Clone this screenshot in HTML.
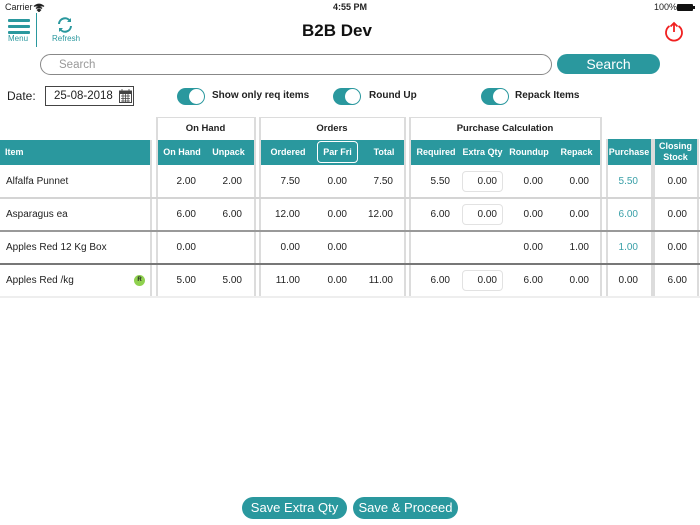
<!DOCTYPE html>
<html><head><meta charset="utf-8"><style>
*{margin:0;padding:0;box-sizing:border-box}
body{width:700px;height:525px;background:#fff;font-family:"Liberation Sans",Arial,sans-serif;position:relative;overflow:hidden;color:#222}
.a{position:absolute}
.teal{background:#2a989e}
.gt{position:absolute;top:117px;height:23px;font-size:9.5px;font-weight:bold;text-align:center;line-height:21px;border:1.5px solid #dcdcdc;border-bottom:none;background:#fff}
.hd{position:absolute;top:140px;height:25px;color:#fff;font-size:9px;font-weight:bold;line-height:25px}
.c{position:absolute;font-size:10px;text-align:right;line-height:33px;height:33px}
.vl{position:absolute;top:117px;width:1.5px;height:180px;background:#dcdcdc}
.hl{position:absolute;height:1.5px}
.tog{position:absolute;width:28px;height:17px;border-radius:9px;background:#2a989e}
.tog:after{content:"";position:absolute;right:1px;top:1px;width:15px;height:15px;border-radius:50%;background:#fff}
.tl{position:absolute;font-size:10px;font-weight:bold}
.box{position:absolute;width:41px;height:21px;border:1px solid #e2e2e2;border-radius:4px;font-size:10px;text-align:right;padding-right:5px;line-height:19px}
.btn{position:absolute;top:497px;height:22px;border-radius:11px;background:#2a989e;color:#fff;font-size:13px;text-align:center;line-height:22px}
</style></head><body>
<div class="a" style="left:5px;top:2px;font-size:9px">Carrier</div>
<svg class="a" style="left:33px;top:3px" width="12" height="9" viewBox="0 0 12 9"><path d="M1 3.5Q6 -1 11 3.5M3 5.5Q6 2.5 9 5.5M6 8.5L4.5 7Q6 5.8 7.5 7Z" stroke="#222" stroke-width="1.3" fill="#222"/></svg>
<div class="a" style="left:333px;top:2px;font-size:9px;font-weight:bold">4:55 PM</div>
<div class="a" style="left:654px;top:2px;font-size:9px">100%</div>
<div class="a" style="left:677px;top:4px;width:16px;height:7px;background:#111;border-radius:1px"></div>
<div class="a" style="left:693px;top:6px;width:1.5px;height:3px;background:#111"></div>
<div class="a teal" style="left:8px;top:19px;width:22px;height:3px;border-radius:1px"></div>
<div class="a teal" style="left:8px;top:25px;width:22px;height:3px;border-radius:1px"></div>
<div class="a teal" style="left:8px;top:31px;width:22px;height:3px;border-radius:1px"></div>
<div class="a" style="left:8px;top:34px;font-size:8px;color:#2a989e">Menu</div>
<div class="a" style="left:36px;top:13px;width:1px;height:34px;background:#2a989e"></div>
<svg class="a" style="left:56px;top:16px" width="18" height="18" viewBox="0 0 18 18"><path d="M3 8A6 6 0 0 1 14 5M15 10A6 6 0 0 1 4 13" stroke="#2a989e" stroke-width="2" fill="none"/><path d="M15 2V6H11Z M3 16V12H7Z" fill="#2a989e"/></svg>
<div class="a" style="left:52px;top:34px;font-size:8px;color:#2a989e">Refresh</div>
<div class="a" style="left:302px;top:21px;font-size:17px;font-weight:bold;color:#111">B2B Dev</div>
<svg class="a" style="left:663px;top:21px" width="22" height="22" viewBox="0 0 22 22"><path d="M6.5 5A8 8 0 1 0 15.5 5" stroke="#f02020" stroke-width="1.8" fill="none"/><path d="M11 2V11M7.5 5.5L11 2L14.5 5.5" stroke="#f02020" stroke-width="1.8" fill="none"/></svg>
<div class="a" style="left:40px;top:54px;width:512px;height:21px;border:1px solid #888;border-radius:11px;font-size:11.5px;color:#999;padding-left:18px;line-height:21px">Search</div>
<div class="btn" style="left:557px;top:54px;width:103px;height:20px;line-height:20px;font-size:14px">Search</div>
<div class="a" style="left:7px;top:89px;font-size:12px">Date:</div>
<div class="a" style="left:45px;top:86px;width:89px;height:20px;border:1px solid #444;font-size:11.5px;padding-left:8px;line-height:19px">25-08-2018</div>
<svg class="a" style="left:119px;top:89px" width="13" height="14" viewBox="0 0 13 14"><rect x="0.5" y="2" width="12" height="11.5" fill="none" stroke="#444"/><rect x="0.5" y="2" width="12" height="3" fill="#444"/><path d="M3 0V3M10 0V3M2 7H11M2 9.5H11M2 12H11M4 5V13M6.5 5V13M9 5V13" stroke="#444" stroke-width="0.8"/></svg>
<div class="tog" style="left:177px;top:88px"></div><div class="tl" style="left:212px;top:90px">Show only req items</div>
<div class="tog" style="left:333px;top:88px"></div><div class="tl" style="left:369px;top:90px">Round Up</div>
<div class="tog" style="left:481px;top:88px"></div><div class="tl" style="left:515px;top:90px">Repack Items</div>

<div class="gt" style="left:156px;width:99px">On Hand</div>
<div class="gt" style="left:259px;width:146px">Orders</div>
<div class="gt" style="left:409px;width:192px">Purchase Calculation</div>

<div class="hd teal" style="left:0;width:150px;padding-left:5px">Item</div>
<div class="hd teal" style="left:157px;width:97px"></div>
<div class="hd teal" style="left:260px;width:144px"></div>
<div class="hd teal" style="left:410px;width:190px"></div>
<div class="hd teal" style="left:607px;width:44px;top:139px;height:26px;line-height:26px;text-align:center">Purchase</div>
<div class="hd teal" style="left:654px;width:43px;top:139px;height:26px;line-height:11px;padding-top:2px;text-align:center">Closing<br>Stock</div>
<div class="hd" style="left:157px;width:50px;text-align:center">On Hand</div>
<div class="hd" style="left:205px;width:47px;text-align:center">Unpack</div>
<div class="hd" style="left:262px;width:52px;text-align:center">Ordered</div>
<div class="a" style="left:317px;top:141px;width:41px;height:22px;border:1px solid #fff;border-radius:4px;color:#fff;font-size:9px;font-weight:bold;text-align:center;line-height:20px">Par Fri</div>
<div class="hd" style="left:365px;width:38px;text-align:center">Total</div>
<div class="hd" style="left:412px;width:48px;text-align:center">Required</div>
<div class="hd" style="left:460px;width:45px;text-align:center">Extra Qty</div>
<div class="hd" style="left:505px;width:48px;text-align:center">Roundup</div>
<div class="hd" style="left:553px;width:47px;text-align:center">Repack</div>

<div class="vl" style="left:150px;top:140px;height:157px"></div>
<div class="vl" style="left:156px"></div><div class="vl" style="left:254px"></div>
<div class="vl" style="left:259px"></div><div class="vl" style="left:404px"></div>
<div class="vl" style="left:409px"></div><div class="vl" style="left:600px"></div>
<div class="vl" style="left:606px;top:139px;height:158px"></div><div class="vl" style="left:651px;top:139px;height:158px"></div>
<div class="vl" style="left:653px;top:139px;height:158px"></div><div class="vl" style="left:697px;top:139px;height:158px"></div>

<div class="hl" style="left:0;width:700px;top:197px;background:#d4d4d4"></div>
<div class="hl" style="left:0;width:700px;top:230px;background:#999"></div>
<div class="hl" style="left:0;width:700px;top:263px;background:#777"></div>
<div class="hl" style="left:0;width:700px;top:296px;background:#eee"></div>

<div class="c" style="left:6px;top:165px;text-align:left">Alfalfa Punnet</div>
<div class="c" style="left:6px;top:198px;text-align:left">Asparagus ea</div>
<div class="c" style="left:6px;top:231px;text-align:left">Apples Red 12 Kg Box</div>
<div class="c" style="left:6px;top:264px;text-align:left">Apples Red /kg</div>
<div class="a" style="left:134px;top:275px;width:11px;height:11px;border-radius:50%;background:#8fd14f;font-size:6px;font-weight:bold;text-align:center;line-height:11px">R</div>

<div class="c" style="right:504px;top:165px">2.00</div><div class="c" style="right:458px;top:165px">2.00</div>
<div class="c" style="right:400px;top:165px">7.50</div><div class="c" style="right:353px;top:165px">0.00</div><div class="c" style="right:307px;top:165px">7.50</div>
<div class="c" style="right:250px;top:165px">5.50</div><div class="box" style="left:462px;top:171px">0.00</div><div class="c" style="right:157px;top:165px">0.00</div><div class="c" style="right:111px;top:165px">0.00</div>
<div class="c" style="right:62px;top:165px;color:#3aa0a8">5.50</div><div class="c" style="right:13px;top:165px">0.00</div>

<div class="c" style="right:504px;top:198px">6.00</div><div class="c" style="right:458px;top:198px">6.00</div>
<div class="c" style="right:400px;top:198px">12.00</div><div class="c" style="right:353px;top:198px">0.00</div><div class="c" style="right:307px;top:198px">12.00</div>
<div class="c" style="right:250px;top:198px">6.00</div><div class="box" style="left:462px;top:204px">0.00</div><div class="c" style="right:157px;top:198px">0.00</div><div class="c" style="right:111px;top:198px">0.00</div>
<div class="c" style="right:62px;top:198px;color:#3aa0a8">6.00</div><div class="c" style="right:13px;top:198px">0.00</div>

<div class="c" style="right:504px;top:231px">0.00</div>
<div class="c" style="right:400px;top:231px">0.00</div><div class="c" style="right:353px;top:231px">0.00</div>
<div class="c" style="right:157px;top:231px">0.00</div><div class="c" style="right:111px;top:231px">1.00</div>
<div class="c" style="right:62px;top:231px;color:#3aa0a8">1.00</div><div class="c" style="right:13px;top:231px">0.00</div>

<div class="c" style="right:504px;top:264px">5.00</div><div class="c" style="right:458px;top:264px">5.00</div>
<div class="c" style="right:400px;top:264px">11.00</div><div class="c" style="right:353px;top:264px">0.00</div><div class="c" style="right:307px;top:264px">11.00</div>
<div class="c" style="right:250px;top:264px">6.00</div><div class="box" style="left:462px;top:270px">0.00</div><div class="c" style="right:157px;top:264px">6.00</div><div class="c" style="right:111px;top:264px">0.00</div>
<div class="c" style="right:62px;top:264px">0.00</div><div class="c" style="right:13px;top:264px">6.00</div>

<div class="btn" style="left:242px;width:105px">Save Extra Qty</div>
<div class="btn" style="left:353px;width:105px">Save &amp; Proceed</div>
</body></html>
